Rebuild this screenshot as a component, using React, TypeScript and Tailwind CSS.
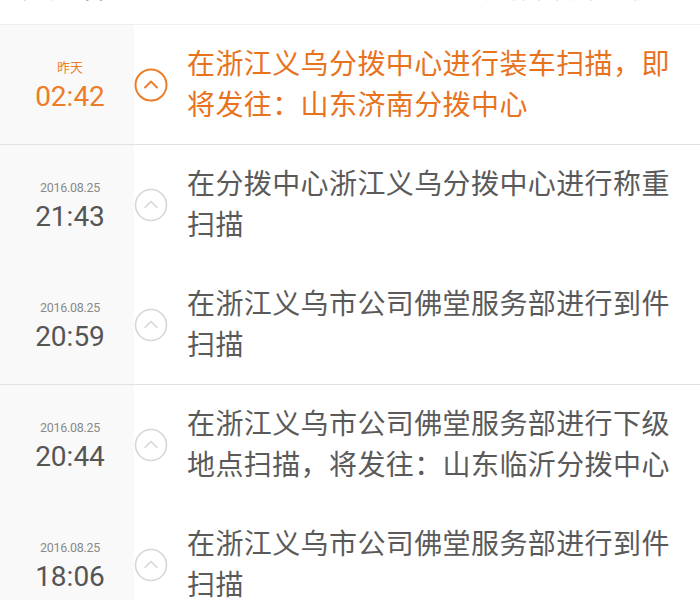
import React from "react";

type Item = {
  label: string;
  time: string;
  text: string;
  active?: boolean;
  divider?: boolean;
  h: string;
};

const items: Item[] = [
  { label: "昨天", time: "02:42", text: "在浙江义乌分拨中心进行装车扫描，即将发往：山东济南分拨中心", active: true, divider: true, h: "h-[119px]" },
  { label: "2016.08.25", time: "21:43", text: "在分拨中心浙江义乌分拨中心进行称重扫描", h: "h-[120px]" },
  { label: "2016.08.25", time: "20:59", text: "在浙江义乌市公司佛堂服务部进行到件扫描", divider: true, h: "h-[119px]" },
  { label: "2016.08.25", time: "20:44", text: "在浙江义乌市公司佛堂服务部进行下级地点扫描，将发往：山东临沂分拨中心", h: "h-[120px]" },
  { label: "2016.08.25", time: "18:06", text: "在浙江义乌市公司佛堂服务部进行到件扫描", h: "h-[120px]" },
];

function CircleUp({ active }: { active?: boolean }) {
  const c = active ? "#ec7d2b" : "#d6d6d6";
  return (
    <svg width="34" height="34" viewBox="0 0 34 34">
      <circle cx="17" cy="17" r="15.5" fill="none" stroke={c} strokeWidth={active ? 2 : 1.6} />
      <path d="M11 19.5 L17 13.5 L23 19.5" fill="none" stroke={c} strokeWidth={active ? 2 : 1.6} strokeLinecap="round" strokeLinejoin="round" />
    </svg>
  );
}

export default function App() {
  return (
    <div
      className="w-[700px] h-[600px] overflow-hidden bg-white"
      style={{ fontFamily: 'Roboto, "Noto Sans CJK SC", sans-serif' }}
    >
      <div className="h-[25px] relative overflow-hidden border-b border-[#eeeeee]">
        <div className="absolute left-[18px] top-[-26px] text-[26px] text-[#555] leading-[30px]">物流详情</div>
        <div className="absolute right-[18px] top-[-26px] text-[26px] text-[#d0d0d0] leading-[30px]">数据来自中通快递</div>
      </div>
      {items.map((it, i) => (
        <div key={i} className={it.divider ? "border-b border-[#e2e2e2]" : ""}>
          <div className={`flex items-center ${it.h}`}>
            <div className="w-[134px] h-full bg-[#f9f9f9] flex flex-col items-center justify-center pl-[6px] pt-[2px]">
              {it.active ? (
                <div className="text-[13px] leading-[16px] text-[#ec7d2b] mb-[6px]">{it.label}</div>
              ) : (
                <div className="text-[12.5px] leading-[16px] text-[#8a8a8a] tracking-[-0.3px] mb-[6px]">{it.label}</div>
              )}
              <div className={`text-[28px] leading-[30px] ${it.active ? "text-[#ec7d2b]" : "text-[#555555]"}`}>{it.time}</div>
            </div>
            <div className="w-[34px] flex items-center justify-center">
              <CircleUp active={it.active} />
            </div>
            <div className="flex-1 pl-[19px] pr-[18px] h-full flex items-center">
              <div
                className={`text-[28px] leading-[41px] tracking-[0.4px] ${it.active ? "text-[#e8731f]" : "text-[#5a5a5a]"}`}
              >
                {it.text}
              </div>
            </div>
          </div>
        </div>
      ))}
    </div>
  );
}
